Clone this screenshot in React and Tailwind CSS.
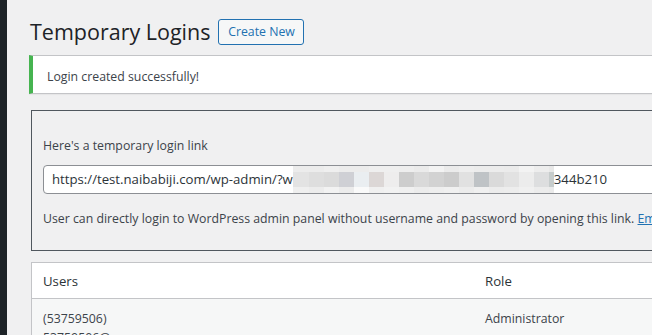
import React from 'react';

// pixelated blur over the secret part of the link: [width, top, middle, bottom]
const mosaic = [
  [16, '#ececec', '#e3e3e3', '#efefef'],
  [15, '#ececec', '#dedede', '#ececec'],
  [15, '#efefef', '#dbdbdb', '#f2f2f2'],
  [15, '#ececec', '#cfd0d5', '#ececec'],
  [15, '#ececec', '#eaeef1', '#fafafa'],
  [15, '#efefef', '#dcd7d6', '#f0f0f0'],
  [15, '#efefef', '#eeeded', '#f2f2f2'],
  [15, '#eeeeee', '#cdcdcd', '#f0f0f0'],
  [15, '#ebebeb', '#d9d9d9', '#ececec'],
  [15, '#f3f3f3', '#d2d2d2', '#eeeeee'],
  [15, '#ebebeb', '#cccccc', '#f0f0f0'],
  [15, '#eeeeee', '#e1e1e1', '#ececec'],
  [15, '#ececec', '#bfc3c6', '#f0f0f0'],
  [15, '#ececec', '#dadada', '#ececec'],
  [15, '#ebebeb', '#e2e2e2', '#ededed'],
  [15, '#f3f3f3', '#ececec', '#f0f0f0'],
  [15, '#ededed', '#dddedf', '#ececec'],
  [5, '#e8e8e8', '#c6cccc', '#eaeaea'],
];

const Mosaic = () => (
  <div className="flex h-full shrink-0">
    {mosaic.map(([w, top, mid, bottom], i) => (
      <div key={i} className="flex flex-col h-full" style={{ width: w }}>
        <div className="h-[6px]" style={{ background: top }} />
        <div className="flex-1" style={{ background: mid }} />
        <div className="h-[6px]" style={{ background: bottom }} />
      </div>
    ))}
  </div>
);

export default function App() {
  return (
    <div
      className="flex w-[652px] h-[335px] overflow-hidden bg-[#f0f0f1] text-[#3c434a]"
      style={{ fontFamily: '"Open Sans", "Noto Sans", sans-serif' }}
    >
      {/* Admin sidebar edge */}
      <div className="w-[7px] shrink-0 bg-[#1d2327]" />

      <div className="shrink-0 w-[700px] pl-[22px]">
        {/* Header */}
        <div className="flex items-center gap-[8px] pt-[19px] h-[45px]">
          <h1 className="text-[21.5px] leading-[26px] text-[#1d2327] pl-[1px] whitespace-nowrap">
            Temporary Logins
          </h1>
          <button className="h-[26px] w-[86px] border border-[#2271b1] rounded-[3px] bg-[#f6f7f7] text-[#2271b1] text-[12.3px] leading-[24px] whitespace-nowrap">
            Create New
          </button>
        </div>

        {/* Notice */}
        <div className="mt-[10px] h-[39px] flex items-center bg-white border border-[#c3c4c7] border-l-4 border-l-[#46b450] pl-[14px] pt-[6px] shadow-[0_1px_1px_rgba(0,0,0,0.04)]">
          <p className="text-[12.3px] whitespace-nowrap">Login created successfully!</p>
        </div>

        {/* Link box */}
        <div className="mt-[16px] ml-[2px] h-[141px] border border-[#50575e] pl-[11px] pt-[25px]">
          <p className="text-[12.3px] leading-[20px] whitespace-nowrap">Here's a temporary login link</p>
          <div className="mt-[9px] flex h-[29px] border border-[#8c8f94] rounded-[4px] bg-white text-[13.2px] text-[#2c3338] overflow-hidden">
            <span className="self-center pl-[8px] whitespace-nowrap">https://test.naibabiji.com/wp-admin/?w</span>
            <Mosaic />
            <span className="self-center whitespace-nowrap">344b210</span>
          </div>
          <p className="mt-[15px] text-[12.3px] leading-[20px] whitespace-nowrap">
            User can directly login to WordPress admin panel without username and password by opening this link.{' '}
            <a className="text-[#2271b1] underline">Email</a>
          </p>
        </div>

        {/* Users table */}
        <div className="mt-[11px] ml-[2px] border border-[#c3c4c7] bg-white">
          <div className="flex h-[36px] items-center pt-[2px] border-b border-[#c3c4c7] text-[13.2px] text-[#2c3338]">
            <div className="w-[453px] pl-[11px]">Users</div>
            <div>Role</div>
          </div>
          <div className="flex bg-[#f6f7f7] pt-[10px] text-[12.3px] leading-[19px]">
            <div className="w-[453px] pl-[11px]">
              <div>(53759506)</div>
              <div>53759506@</div>
            </div>
            <div>Administrator</div>
          </div>
        </div>
      </div>
    </div>
  );
}
